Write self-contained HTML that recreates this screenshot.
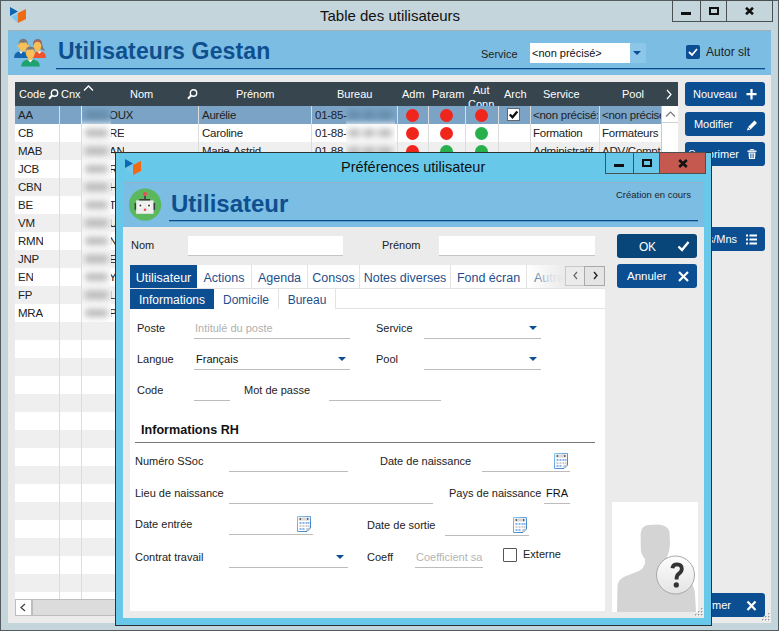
<!DOCTYPE html>
<html><head><meta charset="utf-8"><style>
*{box-sizing:border-box;margin:0;padding:0}
html,body{width:779px;height:631px;overflow:hidden}
body{position:relative;background:#c4d5dc;font-family:"Liberation Sans",sans-serif;font-size:11px;color:#222}
.a{position:absolute}
.t{position:absolute;white-space:nowrap;line-height:1}
.tbtn{position:absolute;border:1px solid #4a4f52}
.btn{position:absolute;background:#0b4f92;border-radius:3px;color:#fff;font-size:12px;line-height:1}
.hd{position:absolute;color:#fff;font-size:11px;line-height:1;white-space:nowrap}
.cell{position:absolute;font-size:11.5px;color:#222;white-space:nowrap;overflow:hidden;line-height:1;letter-spacing:-0.25px}
.dot{position:absolute;width:13px;height:13px;border-radius:50%}
.r{background:#f0261d}.g{background:#27b04c}
.bl{position:absolute;height:11px;filter:blur(2px);background:#a9a9a9;border-radius:2px}
.lbl{position:absolute;font-size:11px;color:#222;white-space:nowrap;line-height:1}
.ul{position:absolute;height:1px;background:#b9b9b9}
.tab{position:absolute;height:23px;background:#fff;color:#1d4f8c;font-size:12.5px;line-height:27px;white-space:nowrap;overflow:hidden}
.tri{position:absolute;width:0;height:0;border-left:4px solid transparent;border-right:4px solid transparent;border-top:4px solid #0d4f95}
</style></head><body>
<div class="a" style="left:0px;top:0px;width:779px;height:631px;border:1px solid #555c60"></div>
<svg class="a" style="left:10px;top:7px" width="17" height="17" viewBox="0 0 17 17">
<polygon points="0,0 8,4.5 0,9" fill="#0b66b4"/>
<polygon points="1,10 8,6 8,16" fill="#7cc7ee"/>
<polygon points="8,6 16,2 16,12 8,16" fill="#ee6a15"/>
</svg>
<div class="t" style="left:320px;top:8px;font-size:15px;color:#111">Table des utilisateurs</div>
<div class="tbtn" style="left:672px;top:0;width:29px;height:22px"></div>
<div class="tbtn" style="left:700px;top:0;width:27px;height:22px"></div>
<div class="tbtn" style="left:726px;top:0;width:47px;height:22px"></div>
<div class="a" style="left:681px;top:12px;width:10px;height:3px;background:#111"></div>
<div class="a" style="left:709px;top:7px;width:10px;height:8px;border:2px solid #111"></div>
<svg class="a" style="left:745px;top:7px" width="9" height="8"><path d="M1 0.8 L8 7.2 M8 0.8 L1 7.2" stroke="#111" stroke-width="2.6"/></svg>
<div class="a" style="left:8px;top:30px;width:763px;height:45px;background:#7bbde3;border-top:1px solid #9fb0b8"></div>
<svg class="a" style="left:8px;top:32px" width="40" height="40" viewBox="0 0 40 40">
 <path d="M6 26 Q6 19.5 13 19 Q20 19.5 20 26 Z" fill="#1566ae"/>
 <path d="M11 19.2 L13 22 L15 19.2 Z" fill="#fff"/>
 <ellipse cx="10.6" cy="14" rx="1" ry="1.4" fill="#f7bf5a"/><ellipse cx="19.9" cy="14" rx="1" ry="1.4" fill="#f7bf5a"/>
 <ellipse cx="15.2" cy="14" rx="4.4" ry="5.6" fill="#f7bf5a"/>
 <path d="M10.8 13.5 Q10.2 6.8 15.2 6.8 Q20.2 6.8 19.6 13.5 Q19.2 10.8 17.8 10.2 Q15 11.2 12 10.4 Q11.1 11.2 10.8 13.5Z" fill="#7a7a7a"/>
 <path d="M25 26 Q25 19.5 31.5 19 Q38 19.5 38 26 Z" fill="#f0532f"/>
 <path d="M29.5 19.2 L31.5 22 L33.5 19.2 Z" fill="#fff"/>
 <path d="M25.2 14 Q24.6 7 29.5 7 Q34.2 7 34 12 Q35 16 37 18.5 Q33 19 32.5 15 Z" fill="#7a7a7a"/>
 <ellipse cx="29.4" cy="14" rx="3.9" ry="5.4" fill="#f7bf5a"/>
 <path d="M25.4 13.5 Q25 7.3 29.5 7.3 Q33.8 7.3 33.5 13 Q32.5 10 29.5 9.6 Q26.3 10 25.4 13.5Z" fill="#7a7a7a"/>
 <path d="M25.6 10.8 Q29.5 7 33.4 10.8" stroke="#e8473a" stroke-width="0.9" fill="none"/>
 <circle cx="25.5" cy="16.3" r="0.7" fill="#e8473a"/><circle cx="33.3" cy="16.3" r="0.7" fill="#e8473a"/>
 <path d="M13 34.5 Q13 27.5 22.5 27 Q32 27.5 32 34.5 Z" fill="#1ea36f"/>
 <path d="M19.5 27.2 L22.3 30.5 L25 27.2 Z" fill="#fff"/>
 <rect x="20.3" y="24" width="4" height="4" fill="#f7bf5a"/>
 <ellipse cx="22.3" cy="21" rx="4.5" ry="5.8" fill="#f7bf5a"/>
 <path d="M17.8 20.5 Q17.2 14.5 22.3 14.5 Q27.4 14.5 26.8 20.5 Q26.3 17.8 25 17.3 Q22 18.2 19 17.4 Q18.2 18.2 17.8 20.5Z" fill="#7a7a7a"/>
</svg>
<div class="t" style="left:58px;top:40px;font-size:23px;font-weight:bold;color:#0e4f8f;letter-spacing:0.15px">Utilisateurs Gestan</div>
<div class="a" style="left:56px;top:68px;width:709px;height:1px;background:#0a4b8e"></div>
<div class="a" style="left:56px;top:69px;width:709px;height:1px;background:rgba(10,75,142,0.3)"></div>
<div class="t" style="left:481px;top:49px;font-size:11px;color:#222">Service</div>
<div class="a" style="left:530px;top:43px;width:100px;height:20px;background:#fff"></div>
<div class="t" style="left:532px;top:48px;font-size:11px;color:#111">&lt;non précisé&gt;</div>
<div class="a" style="left:630px;top:43px;width:16px;height:20px;background:#8cc6e8"></div>
<div class="tri" style="left:633px;top:51px"></div>
<div class="a" style="left:686px;top:45px;width:14px;height:14px;background:#0b4f92;border-radius:2px"></div>
<svg class="a" style="left:686px;top:45px" width="14" height="14"><path d="M3 7 L6 10 L11 4" stroke="#fff" stroke-width="1.8" fill="none"/></svg>
<div class="t" style="left:706px;top:46px;font-size:12px;color:#222">Autor slt</div>
<div class="a" style="left:8px;top:75px;width:763px;height:548px;background:#ebebeb"></div>
<div class="a" style="left:15px;top:106px;width:647px;height:493px;background:#fff"></div>
<div class="a" style="left:15px;top:106px;width:647px;height:18px;background:#7aa3c6"></div>
<div class="a" style="left:15px;top:124px;width:647px;height:18px;background:#ffffff"></div>
<div class="a" style="left:15px;top:142px;width:647px;height:18px;background:#efefef"></div>
<div class="a" style="left:15px;top:160px;width:647px;height:18px;background:#ffffff"></div>
<div class="a" style="left:15px;top:178px;width:647px;height:18px;background:#efefef"></div>
<div class="a" style="left:15px;top:196px;width:647px;height:18px;background:#ffffff"></div>
<div class="a" style="left:15px;top:214px;width:647px;height:18px;background:#efefef"></div>
<div class="a" style="left:15px;top:232px;width:647px;height:18px;background:#ffffff"></div>
<div class="a" style="left:15px;top:250px;width:647px;height:18px;background:#efefef"></div>
<div class="a" style="left:15px;top:268px;width:647px;height:18px;background:#ffffff"></div>
<div class="a" style="left:15px;top:286px;width:647px;height:18px;background:#efefef"></div>
<div class="a" style="left:15px;top:304px;width:647px;height:18px;background:#ffffff"></div>
<div class="a" style="left:15px;top:322px;width:647px;height:18px;background:#efefef"></div>
<div class="a" style="left:15px;top:340px;width:647px;height:18px;background:#ffffff"></div>
<div class="a" style="left:15px;top:358px;width:647px;height:18px;background:#efefef"></div>
<div class="a" style="left:15px;top:376px;width:647px;height:18px;background:#ffffff"></div>
<div class="a" style="left:15px;top:394px;width:647px;height:18px;background:#efefef"></div>
<div class="a" style="left:15px;top:412px;width:647px;height:18px;background:#ffffff"></div>
<div class="a" style="left:15px;top:430px;width:647px;height:18px;background:#efefef"></div>
<div class="a" style="left:15px;top:448px;width:647px;height:18px;background:#ffffff"></div>
<div class="a" style="left:15px;top:466px;width:647px;height:18px;background:#efefef"></div>
<div class="a" style="left:15px;top:484px;width:647px;height:18px;background:#ffffff"></div>
<div class="a" style="left:15px;top:502px;width:647px;height:18px;background:#efefef"></div>
<div class="a" style="left:15px;top:520px;width:647px;height:18px;background:#ffffff"></div>
<div class="a" style="left:15px;top:538px;width:647px;height:18px;background:#efefef"></div>
<div class="a" style="left:15px;top:556px;width:647px;height:18px;background:#ffffff"></div>
<div class="a" style="left:15px;top:574px;width:647px;height:18px;background:#efefef"></div>
<div class="a" style="left:59px;top:106px;width:1px;height:493px;background:#dcdcdc"></div>
<div class="a" style="left:81px;top:106px;width:1px;height:493px;background:#dcdcdc"></div>
<div class="a" style="left:198px;top:106px;width:1px;height:493px;background:#dcdcdc"></div>
<div class="a" style="left:311px;top:106px;width:1px;height:493px;background:#dcdcdc"></div>
<div class="a" style="left:397px;top:106px;width:1px;height:493px;background:#dcdcdc"></div>
<div class="a" style="left:428px;top:106px;width:1px;height:493px;background:#dcdcdc"></div>
<div class="a" style="left:465px;top:106px;width:1px;height:493px;background:#dcdcdc"></div>
<div class="a" style="left:498px;top:106px;width:1px;height:493px;background:#dcdcdc"></div>
<div class="a" style="left:530px;top:106px;width:1px;height:493px;background:#dcdcdc"></div>
<div class="a" style="left:599px;top:106px;width:1px;height:493px;background:#dcdcdc"></div>
<div class="a" style="left:81px;top:106px;width:1px;height:18px;background:#e8eef4"></div>
<div class="cell" style="left:18px;top:110px;">AA</div>
<div class="cell" style="left:109px;top:110px;">OUX</div>
<div class="cell" style="left:202px;top:110px;">Aurélie</div>
<div class="cell" style="left:315px;top:110px;">01-85-</div>
<div class="dot r" style="left:405.5px;top:108.5px"></div>
<div class="dot r" style="left:439.5px;top:108.5px"></div>
<div class="dot r" style="left:474.5px;top:108.5px"></div>
<div class="a" style="left:507px;top:108px;width:13px;height:13px;background:#fff;border:1px solid #666"></div>
<svg class="a" style="left:507px;top:108px" width="13" height="13"><path d="M2.8 6.5 L5.5 9.3 L10.3 3.5" stroke="#111" stroke-width="2.4" fill="none"/></svg>
<div class="cell" style="left:533px;top:110px;width:65px">&lt;non précisé:</div>
<div class="cell" style="left:602px;top:110px;width:59px">&lt;non précisé</div>
<div class="cell" style="left:18px;top:128px;">CB</div>
<div class="cell" style="left:109px;top:128px;">RE</div>
<div class="cell" style="left:202px;top:128px;">Caroline</div>
<div class="cell" style="left:315px;top:128px;">01-88-</div>
<div class="dot r" style="left:405.5px;top:126.5px"></div>
<div class="dot r" style="left:439.5px;top:126.5px"></div>
<div class="dot g" style="left:474.5px;top:126.5px"></div>
<div class="cell" style="left:533px;top:128px;width:65px">Formation</div>
<div class="cell" style="left:602px;top:128px;width:59px">Formateurs</div>
<div class="cell" style="left:18px;top:146px;">MAB</div>
<div class="cell" style="left:109px;top:146px;">AN</div>
<div class="cell" style="left:202px;top:146px;">Marie-Astrid</div>
<div class="cell" style="left:315px;top:146px;">01-88-</div>
<div class="dot r" style="left:405.5px;top:144.5px"></div>
<div class="dot g" style="left:439.5px;top:144.5px"></div>
<div class="dot g" style="left:474.5px;top:144.5px"></div>
<div class="cell" style="left:533px;top:146px;width:65px">Administratif</div>
<div class="cell" style="left:602px;top:146px;width:59px">ADV/Compta</div>
<div class="cell" style="left:18px;top:164px;">JCB</div>
<div class="cell" style="left:109px;top:164px;">R</div>
<div class="cell" style="left:18px;top:182px;">CBN</div>
<div class="cell" style="left:109px;top:182px;">H</div>
<div class="cell" style="left:18px;top:200px;">BE</div>
<div class="cell" style="left:109px;top:200px;">T</div>
<div class="cell" style="left:18px;top:218px;">VM</div>
<div class="cell" style="left:109px;top:218px;">U</div>
<div class="cell" style="left:18px;top:236px;">RMN</div>
<div class="cell" style="left:109px;top:236px;">N</div>
<div class="cell" style="left:18px;top:254px;">JNP</div>
<div class="cell" style="left:109px;top:254px;">E</div>
<div class="cell" style="left:18px;top:272px;">EN</div>
<div class="cell" style="left:109px;top:272px;">Y</div>
<div class="cell" style="left:18px;top:290px;">FP</div>
<div class="cell" style="left:109px;top:290px;">L</div>
<div class="cell" style="left:18px;top:308px;">MRA</div>
<div class="cell" style="left:109px;top:308px;">P</div>
<div class="a" style="left:82px;top:106px;width:29px;height:216px;overflow:hidden"><div class="a" style="left:-6px;top:-6px;width:41px;height:228px;filter:blur(3px)"><div class="a" style="left:0;top:-6px;width:41px;height:24px;background:#7aa3c6"></div><div class="a" style="left:9px;top:11px;width:23px;height:8px;background:#648aa8"></div><div class="a" style="left:0;top:24px;width:41px;height:18px;background:#ffffff"></div><div class="a" style="left:9px;top:29px;width:23px;height:8px;background:#b9b9b9"></div><div class="a" style="left:0;top:42px;width:41px;height:18px;background:#efefef"></div><div class="a" style="left:9px;top:47px;width:23px;height:8px;background:#b9b9b9"></div><div class="a" style="left:0;top:60px;width:41px;height:18px;background:#ffffff"></div><div class="a" style="left:9px;top:65px;width:23px;height:8px;background:#b9b9b9"></div><div class="a" style="left:0;top:78px;width:41px;height:18px;background:#efefef"></div><div class="a" style="left:9px;top:83px;width:23px;height:8px;background:#b9b9b9"></div><div class="a" style="left:0;top:96px;width:41px;height:18px;background:#ffffff"></div><div class="a" style="left:9px;top:101px;width:23px;height:8px;background:#b9b9b9"></div><div class="a" style="left:0;top:114px;width:41px;height:18px;background:#efefef"></div><div class="a" style="left:9px;top:119px;width:23px;height:8px;background:#b9b9b9"></div><div class="a" style="left:0;top:132px;width:41px;height:18px;background:#ffffff"></div><div class="a" style="left:9px;top:137px;width:23px;height:8px;background:#b9b9b9"></div><div class="a" style="left:0;top:150px;width:41px;height:18px;background:#efefef"></div><div class="a" style="left:9px;top:155px;width:23px;height:8px;background:#b9b9b9"></div><div class="a" style="left:0;top:168px;width:41px;height:18px;background:#ffffff"></div><div class="a" style="left:9px;top:173px;width:23px;height:8px;background:#b9b9b9"></div><div class="a" style="left:0;top:186px;width:41px;height:18px;background:#efefef"></div><div class="a" style="left:9px;top:191px;width:23px;height:8px;background:#b9b9b9"></div><div class="a" style="left:0;top:204px;width:41px;height:24px;background:#ffffff"></div><div class="a" style="left:9px;top:209px;width:23px;height:8px;background:#b9b9b9"></div></div></div>
<div class="a" style="left:346px;top:106px;width:49px;height:54px;overflow:hidden"><div class="a" style="left:-6px;top:-6px;width:61px;height:66px;filter:blur(3px)"><div class="a" style="left:0;top:-6px;width:61px;height:24px;background:#7aa3c6"></div><div class="a" style="left:8px;top:11px;width:12px;height:8px;background:#648aa8"></div><div class="a" style="left:23px;top:11px;width:12px;height:8px;background:#648aa8"></div><div class="a" style="left:38px;top:11px;width:14px;height:8px;background:#648aa8"></div><div class="a" style="left:0;top:24px;width:61px;height:18px;background:#ffffff"></div><div class="a" style="left:8px;top:29px;width:12px;height:8px;background:#b9b9b9"></div><div class="a" style="left:23px;top:29px;width:12px;height:8px;background:#b9b9b9"></div><div class="a" style="left:38px;top:29px;width:14px;height:8px;background:#b9b9b9"></div><div class="a" style="left:0;top:42px;width:61px;height:24px;background:#efefef"></div><div class="a" style="left:8px;top:47px;width:12px;height:8px;background:#b9b9b9"></div><div class="a" style="left:23px;top:47px;width:12px;height:8px;background:#b9b9b9"></div><div class="a" style="left:38px;top:47px;width:14px;height:8px;background:#b9b9b9"></div></div></div>
<div class="a" style="left:661px;top:106px;width:17px;height:493px;background:#fff;border-left:1px solid #c9c9c9"></div>
<div class="a" style="left:662px;top:106px;width:16px;height:17px;background:#fff;border-bottom:1px solid #d0d0d0"></div>
<svg class="a" style="left:665px;top:110px" width="11" height="8"><path d="M1 6.5 L5.5 2 L10 6.5" stroke="#777" stroke-width="1.2" fill="none"/></svg>
<div class="a" style="left:15px;top:599px;width:663px;height:17px;background:#ebebeb"></div>
<div class="a" style="left:15px;top:599px;width:17px;height:17px;background:#fff;border:1px solid #bdbdbd"></div>
<svg class="a" style="left:19px;top:603px" width="8" height="9"><path d="M6 1 L2 4.5 L6 8" stroke="#444" stroke-width="1.3" fill="none"/></svg>
<div class="a" style="left:32px;top:599px;width:646px;height:17px;background:#dcdcdc;border:1px solid #bdbdbd"></div>
<div class="a" style="left:15px;top:82px;width:663px;height:24px;background:#36454e;overflow:hidden">
<div class="hd" style="left:4px;top:7px;">Code</div>
<div class="hd" style="left:46px;top:7px;">Cnx</div>
<div class="hd" style="left:115px;top:7px;">Nom</div>
<div class="hd" style="left:221px;top:7px;">Prénom</div>
<div class="hd" style="left:322px;top:7px;">Bureau</div>
<div class="hd" style="left:387px;top:7px;">Adm</div>
<div class="hd" style="left:417px;top:7px;">Param</div>
<div class="hd" style="left:528px;top:7px;">Service</div>
<div class="hd" style="left:607px;top:7px;">Pool</div>
<div class="hd" style="left:489px;top:7px;">Arch</div>
<div class="hd" style="left:458px;top:3px;">Aut</div>
<div class="hd" style="left:453px;top:17px;">Conn</div>
</div>
<svg class="a" style="left:48px;top:89px" width="11" height="11"><circle cx="6.5" cy="4" r="3.2" stroke="#fff" stroke-width="1.4" fill="none"/><path d="M4.3 6.3 L1 9.8" stroke="#fff" stroke-width="2"/></svg>
<svg class="a" style="left:187px;top:89px" width="11" height="11"><circle cx="6.5" cy="4" r="3.2" stroke="#fff" stroke-width="1.4" fill="none"/><path d="M4.3 6.3 L1 9.8" stroke="#fff" stroke-width="2"/></svg>
<svg class="a" style="left:83px;top:84px" width="11" height="8"><path d="M1 6.5 L5.5 2 L10 6.5" stroke="#fff" stroke-width="1.3" fill="none"/></svg>
<svg class="a" style="left:665px;top:89px" width="8" height="11"><path d="M2 1 L6 5.5 L2 10" stroke="#fff" stroke-width="1.2" fill="none"/></svg>
<div class="btn" style="left:685px;top:82px;width:80px;height:24px"></div>
<div class="t" style="right:42px;top:89px;font-size:11px;color:#fff">Nouveau</div>
<svg class="a" style="left:746px;top:82px" width="11" height="24"><path d="M5.5 7 V17.5 M0.5 12.2 H10.5" stroke="#fff" stroke-width="2.2"/></svg>
<div class="btn" style="left:685px;top:112px;width:80px;height:24px"></div>
<div class="t" style="right:46px;top:119px;font-size:11px;color:#fff">Modifier</div>
<svg class="a" style="left:746px;top:112px" width="12" height="24"><path d="M1 18.5 L2 15 L8.5 8.5 L11 11 L4.5 17.5 Z" fill="#fff"/><path d="M2.2 15.2 L4.3 17.3" stroke="#0b4f92" stroke-width="0.8"/></svg>
<div class="btn" style="left:685px;top:142px;width:80px;height:24px"></div>
<div class="t" style="right:40px;top:149px;font-size:11px;color:#fff">Supprimer</div>
<svg class="a" style="left:747px;top:142px" width="10" height="24"><path d="M0.5 9.2 H9.5" stroke="#fff" stroke-width="1.4"/><path d="M3.3 8.5 V7.6 H6.7 V8.5" stroke="#fff" stroke-width="1" fill="none"/><path d="M1.5 10.5 H8.5 L8 17 H2 Z" fill="#fff"/><path d="M3.6 11.5 V16 M5 11.5 V16 M6.4 11.5 V16" stroke="#0b4f92" stroke-width="0.7"/></svg>
<div class="btn" style="left:685px;top:227px;width:80px;height:24px"></div>
<div class="t" style="right:42px;top:234px;font-size:11px;color:#fff">Droits/Mns</div>
<svg class="a" style="left:746px;top:227px" width="11" height="24"><path d="M0 8.5 H2 M0 12.5 H2 M0 16.5 H2 M3.5 8.5 H11 M3.5 12.5 H11 M3.5 16.5 H11" stroke="#fff" stroke-width="1.8"/></svg>
<div class="btn" style="left:685px;top:593px;width:80px;height:24px"></div>
<div class="t" style="right:48px;top:600px;font-size:11px;color:#fff">Fermer</div>
<svg class="a" style="left:746px;top:593px" width="11" height="24"><path d="M1.5 8.5 L9.5 17 M9.5 8.5 L1.5 17" stroke="#fff" stroke-width="2.2"/></svg>
<div class="a" style="left:115px;top:152px;width:597px;height:474px;background:#67c8ea;border:1px solid #2b3236"></div>
<svg class="a" style="left:125px;top:159px" width="17" height="17" viewBox="0 0 17 17">
<polygon points="0,0 8,4.5 0,9" fill="#0b66b4"/>
<polygon points="1,10 8,6 8,16" fill="#7cc7ee"/>
<polygon points="8,6 16,2 16,12 8,16" fill="#ee6a15"/>
</svg>
<div class="t" style="left:341px;top:160px;font-size:14.5px;color:#111">Préférences utilisateur</div>
<div class="tbtn" style="left:605px;top:152px;width:29px;height:22px"></div>
<div class="tbtn" style="left:633px;top:152px;width:27px;height:22px"></div>
<div class="a" style="left:659px;top:152px;width:47px;height:22px;background:#c6594f;border:1px solid #4a4f52"></div>
<div class="a" style="left:614px;top:164px;width:10px;height:3px;background:#111"></div>
<div class="a" style="left:642px;top:159px;width:10px;height:8px;border:2px solid #111"></div>
<svg class="a" style="left:678px;top:159px" width="10" height="9"><path d="M1.2 1 L8.8 8 M8.8 1 L1.2 8" stroke="#111" stroke-width="2.6"/></svg>
<div class="a" style="left:123px;top:182px;width:581px;height:45px;background:#7bbde3;border-top:1px solid #93b2c6"></div>
<svg class="a" style="left:127px;top:187px" width="36" height="36" viewBox="0 0 36 36">
<circle cx="18.1" cy="17.7" r="16.1" fill="#5cb85c"/>
<rect x="9.1" y="13.4" width="17.4" height="13.4" fill="#eeeeee"/>
<rect x="12.3" y="12" width="10.8" height="1.5" fill="#3c3c3c"/>
<rect x="17.2" y="9" width="1.6" height="3" fill="#3c3c3c"/>
<circle cx="18" cy="7.1" r="2" fill="#f04a5a"/>
<rect x="7.6" y="16" width="1.5" height="6.8" fill="#3c3c3c"/>
<rect x="26.6" y="16" width="1.5" height="6.8" fill="#3c3c3c"/>
<circle cx="13.4" cy="18.5" r="2.3" fill="#fff"/><circle cx="22" cy="18.5" r="2.3" fill="#fff"/>
<circle cx="13.4" cy="18.5" r="1" fill="#333"/><circle cx="22" cy="18.5" r="1" fill="#333"/>
<circle cx="18" cy="22.8" r="1.3" fill="#f04a5a"/>
</svg>
<div class="t" style="left:171px;top:192px;font-size:24px;font-weight:bold;color:#0e4f8f">Utilisateur</div>
<div class="t" style="left:616px;top:190px;font-size:9.5px;color:#1e1e1e">Création en cours</div>
<div class="a" style="left:169px;top:220px;width:529px;height:1px;background:#0a4b8e"></div>
<div class="a" style="left:169px;top:221px;width:529px;height:1px;background:rgba(10,75,142,0.3)"></div>
<div class="a" style="left:123px;top:227px;width:581px;height:391px;background:#ebebeb"></div>
<div class="lbl" style="left:131px;top:240px;">Nom</div>
<div class="a" style="left:188px;top:236px;width:155px;height:20px;background:#fff;border-bottom:1px solid #c4c4c4"></div>
<div class="lbl" style="left:382px;top:240px;">Prénom</div>
<div class="a" style="left:439px;top:236px;width:156px;height:20px;background:#fff;border-bottom:1px solid #c4c4c4"></div>
<div class="btn" style="left:617px;top:234px;width:80px;height:24px;background:#084579"></div>
<div class="t" style="left:639px;top:241px;font-size:12px;color:#fff;letter-spacing:-0.3px">OK</div>
<svg class="a" style="left:677px;top:240px" width="13" height="12"><path d="M1.5 6.5 L5 10 L11.5 2" stroke="#fff" stroke-width="2.4" fill="none"/></svg>
<div class="btn" style="left:617px;top:264px;width:80px;height:24px"></div>
<div class="t" style="left:627px;top:271px;font-size:11.5px;color:#fff">Annuler</div>
<svg class="a" style="left:678px;top:271px" width="11" height="11"><path d="M1 1 L10 10 M10 1 L1 10" stroke="#fff" stroke-width="2.2"/></svg>
<div class="tab" style="left:130px;top:265px;width:67px;background:#0b4f92;color:#fff;text-align:center;">Utilisateur</div>
<div class="tab" style="left:197px;top:265px;width:55px;border-right:1px solid #e3e3e3;text-align:center;">Actions</div>
<div class="tab" style="left:252px;top:265px;width:56px;border-right:1px solid #e3e3e3;text-align:center;">Agenda</div>
<div class="tab" style="left:308px;top:265px;width:52px;border-right:1px solid #e3e3e3;text-align:center;">Consos</div>
<div class="tab" style="left:360px;top:265px;width:91px;border-right:1px solid #e3e3e3;text-align:center;">Notes diverses</div>
<div class="tab" style="left:451px;top:265px;width:76px;border-right:1px solid #e3e3e3;text-align:center;">Fond écran</div>
<div class="tab" style="left:527px;top:265px;width:38px;border-right:1px solid #e3e3e3;text-align:center;text-align:left;padding-left:7px;">Autre</div>
<div class="a" style="left:527px;top:265px;width:38px;height:23px;background:linear-gradient(90deg,rgba(255,255,255,0) 0%,rgba(240,240,240,0.85) 60%,#ebebeb 100%)"></div>
<div class="a" style="left:565px;top:266px;width:20px;height:20px;background:#ebebeb;border:1px solid #c9c9c9"></div>
<div class="a" style="left:584px;top:266px;width:21px;height:20px;background:#e4e4e4;border:1px solid #a9a9a9"></div>
<svg class="a" style="left:572px;top:271px" width="7" height="9"><path d="M5 1 L2 4.5 L5 8" stroke="#666" stroke-width="1.2" fill="none"/></svg>
<svg class="a" style="left:592px;top:271px" width="7" height="9"><path d="M2 1 L5 4.5 L2 8" stroke="#222" stroke-width="1.4" fill="none"/></svg>
<div class="a" style="left:130px;top:288px;width:475px;height:21px;background:#fff;border-top:1px solid #e3e3e3;border-bottom:1px solid #e3e3e3"></div>
<div class="tab" style="left:130px;top:289px;width:84px;height:20px;line-height:22px;font-size:12px;background:#0b4f92;color:#fff;text-align:center">Informations</div>
<div class="tab" style="left:214px;top:289px;width:65px;height:20px;line-height:22px;font-size:12px;border-right:1px solid #e3e3e3;text-align:center">Domicile</div>
<div class="tab" style="left:279px;top:289px;width:57px;height:20px;line-height:22px;font-size:12px;border-right:1px solid #e3e3e3;text-align:center">Bureau</div>
<div class="a" style="left:130px;top:309px;width:475px;height:302px;background:#fff"></div>
<div class="lbl" style="left:137px;top:323px;">Poste</div>
<div class="lbl" style="left:195px;top:323px;color:#b0b0b0">Intitulé du poste</div>
<div class="a" style="left:194px;top:338px;width:156px;height:1px;background:#bcbcbc"></div>
<div class="lbl" style="left:376px;top:323px;">Service</div>
<div class="a" style="left:424px;top:338px;width:117px;height:1px;background:#bcbcbc"></div>
<div class="tri" style="left:529px;top:326px"></div>
<div class="lbl" style="left:137px;top:354px;">Langue</div>
<div class="lbl" style="left:196px;top:354px;color:#111">Français</div>
<div class="a" style="left:194px;top:369px;width:156px;height:1px;background:#bcbcbc"></div>
<div class="tri" style="left:338px;top:357px"></div>
<div class="lbl" style="left:376px;top:354px;">Pool</div>
<div class="a" style="left:424px;top:369px;width:117px;height:1px;background:#bcbcbc"></div>
<div class="tri" style="left:529px;top:357px"></div>
<div class="lbl" style="left:137px;top:385px;">Code</div>
<div class="a" style="left:194px;top:400px;width:36px;height:1px;background:#bcbcbc"></div>
<div class="lbl" style="left:244px;top:385px;">Mot de passe</div>
<div class="a" style="left:329px;top:400px;width:112px;height:1px;background:#bcbcbc"></div>
<div class="lbl" style="left:141px;top:424px;font-size:12.6px;font-weight:bold;color:#111">Informations RH</div>
<div class="a" style="left:135px;top:442px;width:460px;height:1px;background:#7a7a7a"></div>
<div class="lbl" style="left:135px;top:456px;">Numéro SSoc</div>
<div class="a" style="left:229px;top:471px;width:119px;height:1px;background:#bcbcbc"></div>
<div class="lbl" style="left:380px;top:456px;">Date de naissance</div>
<div class="a" style="left:482px;top:471px;width:88px;height:1px;background:#bcbcbc"></div>
<div class="lbl" style="left:135px;top:488px;">Lieu de naissance</div>
<div class="a" style="left:229px;top:503px;width:204px;height:1px;background:#bcbcbc"></div>
<div class="lbl" style="left:449px;top:488px;">Pays de naissance</div>
<div class="lbl" style="left:546px;top:488px;color:#111">FRA</div>
<div class="a" style="left:544px;top:503px;width:26px;height:1px;background:#bcbcbc"></div>
<div class="lbl" style="left:135px;top:519px;">Date entrée</div>
<div class="a" style="left:229px;top:534px;width:84px;height:1px;background:#bcbcbc"></div>
<div class="lbl" style="left:367px;top:520px;">Date de sortie</div>
<div class="a" style="left:445px;top:535px;width:84px;height:1px;background:#bcbcbc"></div>
<div class="lbl" style="left:135px;top:552px;">Contrat travail</div>
<div class="a" style="left:229px;top:567px;width:119px;height:1px;background:#bcbcbc"></div>
<div class="tri" style="left:336px;top:555px"></div>
<div class="lbl" style="left:367px;top:552px;">Coeff</div>
<div class="lbl" style="left:416px;top:552px;color:#b5b5b5;width:67px;overflow:hidden">Coefficient sa</div>
<div class="a" style="left:415px;top:567px;width:68px;height:1px;background:#bcbcbc"></div>
<div class="a" style="left:503px;top:548px;width:14px;height:14px;background:#fff;border:1px solid #555;border-radius:1px"></div>
<div class="lbl" style="left:523px;top:549px;">Externe</div>
<svg class="a" style="left:554px;top:453px" width="15" height="16" viewBox="0 0 15 16"><defs><linearGradient id="cg554" x1="0" y1="0" x2="1" y2="1"><stop offset="0" stop-color="#8ccaf0"/><stop offset="1" stop-color="#2f73c0"/></linearGradient></defs><path d="M0.5 0.5 H13.5 V12 L10 15.5 H0.5 Z" fill="#fff" stroke="url(#cg554)" stroke-width="1"/><rect x="1.5" y="1.5" width="11" height="3" fill="#d6d6d6"/><path d="M2 3 L4 1.8 V4.2Z M12 3 L10 1.8 V4.2Z" fill="#555"/><g fill="#8ab4f0"><rect x="2.5" y="6" width="2" height="2"/><rect x="5.5" y="6" width="2" height="2"/><rect x="8.5" y="6" width="2" height="2"/><rect x="11" y="6" width="1.5" height="2"/><rect x="2.5" y="12" width="2" height="2"/><rect x="5.5" y="12" width="2" height="2"/></g><g fill="#cfcfcf"><rect x="2.5" y="9" width="2" height="2"/><rect x="5.5" y="9" width="2" height="2"/><rect x="8.5" y="9" width="2" height="2"/><rect x="11" y="9" width="1.5" height="2"/></g><path d="M9 15.5 L9.5 12 L13.5 11.5 Z" fill="#c8c8c8"/></svg>
<svg class="a" style="left:297px;top:516px" width="15" height="16" viewBox="0 0 15 16"><defs><linearGradient id="cg297" x1="0" y1="0" x2="1" y2="1"><stop offset="0" stop-color="#8ccaf0"/><stop offset="1" stop-color="#2f73c0"/></linearGradient></defs><path d="M0.5 0.5 H13.5 V12 L10 15.5 H0.5 Z" fill="#fff" stroke="url(#cg297)" stroke-width="1"/><rect x="1.5" y="1.5" width="11" height="3" fill="#d6d6d6"/><path d="M2 3 L4 1.8 V4.2Z M12 3 L10 1.8 V4.2Z" fill="#555"/><g fill="#8ab4f0"><rect x="2.5" y="6" width="2" height="2"/><rect x="5.5" y="6" width="2" height="2"/><rect x="8.5" y="6" width="2" height="2"/><rect x="11" y="6" width="1.5" height="2"/><rect x="2.5" y="12" width="2" height="2"/><rect x="5.5" y="12" width="2" height="2"/></g><g fill="#cfcfcf"><rect x="2.5" y="9" width="2" height="2"/><rect x="5.5" y="9" width="2" height="2"/><rect x="8.5" y="9" width="2" height="2"/><rect x="11" y="9" width="1.5" height="2"/></g><path d="M9 15.5 L9.5 12 L13.5 11.5 Z" fill="#c8c8c8"/></svg>
<svg class="a" style="left:513px;top:517px" width="15" height="16" viewBox="0 0 15 16"><defs><linearGradient id="cg513" x1="0" y1="0" x2="1" y2="1"><stop offset="0" stop-color="#8ccaf0"/><stop offset="1" stop-color="#2f73c0"/></linearGradient></defs><path d="M0.5 0.5 H13.5 V12 L10 15.5 H0.5 Z" fill="#fff" stroke="url(#cg513)" stroke-width="1"/><rect x="1.5" y="1.5" width="11" height="3" fill="#d6d6d6"/><path d="M2 3 L4 1.8 V4.2Z M12 3 L10 1.8 V4.2Z" fill="#555"/><g fill="#8ab4f0"><rect x="2.5" y="6" width="2" height="2"/><rect x="5.5" y="6" width="2" height="2"/><rect x="8.5" y="6" width="2" height="2"/><rect x="11" y="6" width="1.5" height="2"/><rect x="2.5" y="12" width="2" height="2"/><rect x="5.5" y="12" width="2" height="2"/></g><g fill="#cfcfcf"><rect x="2.5" y="9" width="2" height="2"/><rect x="5.5" y="9" width="2" height="2"/><rect x="8.5" y="9" width="2" height="2"/><rect x="11" y="9" width="1.5" height="2"/></g><path d="M9 15.5 L9.5 12 L13.5 11.5 Z" fill="#c8c8c8"/></svg>
<div class="a" style="left:612px;top:502px;width:86px;height:110px;background:#fff"></div>
<svg class="a" style="left:612px;top:502px" width="86" height="110" viewBox="0 0 86 110">
<path d="M5 110 L5.5 84 Q6 77 14 74 L27 69 Q32 66 33 61 L33 57 Q31 55 30 52 Q28.5 50 28.8 46 L28.6 32 Q29 24 36 23 L46 22.5 Q56 23 57.5 30 L58 42 Q57.5 50 55 55 Q53.5 60 54 64 Q56 68 62 71 L74 76 Q82 80 83 92 L84 110 Z" fill="#d4d4d4"/>
</svg>
<svg class="a" style="left:655px;top:555px" width="41" height="41" viewBox="0 0 41 41">
<defs><linearGradient id="qg" x1="0" y1="0" x2="0" y2="1"><stop offset="0" stop-color="#fdfdfd"/><stop offset="1" stop-color="#e4e4e4"/></linearGradient></defs>
<circle cx="20.5" cy="20" r="19" fill="url(#qg)" stroke="#a8a8a8" stroke-width="1"/>
<path d="M17.4 13.2 Q18 9.4 22.2 9.4 Q26.8 9.6 26.8 13.8 Q26.8 16.6 24 18.6 Q21.6 20.4 21.6 23.4 V24.6" stroke="#333" stroke-width="3.8" fill="none"/>
<circle cx="21.3" cy="29.9" r="2.6" fill="#333"/>
</svg>
<svg class="a" style="left:761px;top:612px" width="9" height="9"><rect x="7" y="1" width="1.5" height="1.5" fill="#9a9a9a"/><rect x="8" y="2" width="1" height="1" fill="#fff"/><rect x="4" y="4" width="1.5" height="1.5" fill="#9a9a9a"/><rect x="5" y="5" width="1" height="1" fill="#fff"/><rect x="7" y="4" width="1.5" height="1.5" fill="#9a9a9a"/><rect x="8" y="5" width="1" height="1" fill="#fff"/><rect x="1" y="7" width="1.5" height="1.5" fill="#9a9a9a"/><rect x="2" y="8" width="1" height="1" fill="#fff"/><rect x="4" y="7" width="1.5" height="1.5" fill="#9a9a9a"/><rect x="5" y="8" width="1" height="1" fill="#fff"/><rect x="7" y="7" width="1.5" height="1.5" fill="#9a9a9a"/><rect x="8" y="8" width="1" height="1" fill="#fff"/></svg>
<svg class="a" style="left:694px;top:607px" width="9" height="9"><rect x="7" y="1" width="1.5" height="1.5" fill="#9a9a9a"/><rect x="8" y="2" width="1" height="1" fill="#fff"/><rect x="4" y="4" width="1.5" height="1.5" fill="#9a9a9a"/><rect x="5" y="5" width="1" height="1" fill="#fff"/><rect x="7" y="4" width="1.5" height="1.5" fill="#9a9a9a"/><rect x="8" y="5" width="1" height="1" fill="#fff"/><rect x="1" y="7" width="1.5" height="1.5" fill="#9a9a9a"/><rect x="2" y="8" width="1" height="1" fill="#fff"/><rect x="4" y="7" width="1.5" height="1.5" fill="#9a9a9a"/><rect x="5" y="8" width="1" height="1" fill="#fff"/><rect x="7" y="7" width="1.5" height="1.5" fill="#9a9a9a"/><rect x="8" y="8" width="1" height="1" fill="#fff"/></svg>
</body></html>
